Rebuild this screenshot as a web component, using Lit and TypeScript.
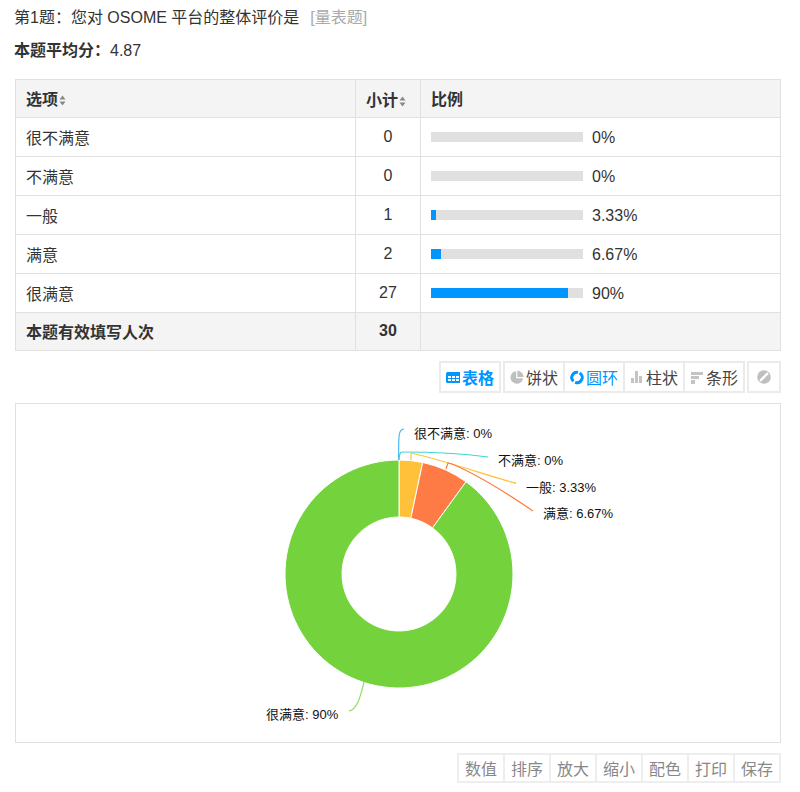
import { LitElement, html, css, svg } from "lit";
import { customElement } from "lit/decorators.js";

const rows = [
  ["很不满意", "0", 0, "0%"],
  ["不满意", "0", 0, "0%"],
  ["一般", "1", 3.33, "3.33%"],
  ["满意", "2", 6.67, "6.67%"],
  ["很满意", "27", 90, "90%"],
] as const;

const sortIcon = html`<svg class="sort" width="7" height="11" viewBox="0 0 7 11"><path d="M3.5 0.5 L6.5 4.5 H0.5Z M0.5 6.5 H6.5 L3.5 10.5Z" fill="#888"/></svg>`;

const views = [
  { label: "表格", on: true, bold: true, icon: svg`<rect x="0" y="2" width="15" height="11" rx="1.5" fill="#0095ff"/><g fill="#fff"><rect x="2" y="6" width="3" height="2"/><rect x="6" y="6" width="3" height="2"/><rect x="10" y="6" width="3" height="2"/><rect x="2" y="9" width="3" height="2"/><rect x="6" y="9" width="3" height="2"/><rect x="10" y="9" width="3" height="2"/></g>` },
  { label: "饼状", icon: svg`<path d="M6.2 1.2 A6.3 6.3 0 1 0 13 8.2 H6.2Z M7.4 0.8 V7 H13.6 A6.3 6.3 0 0 0 7.4 0.8Z" fill="#bfbfbf"/>` },
  { label: "圆环", on: true, icon: svg`<circle cx="7" cy="7.5" r="5.2" fill="none" stroke="#0095ff" stroke-width="3" pathLength="360" stroke-dasharray="170 25 145 20" transform="rotate(-60 7 7.5)"/>` },
  { label: "柱状", icon: svg`<g fill="#c4c4c4"><rect x="1" y="8" width="3" height="5"/><rect x="5" y="1" width="3" height="12"/><rect x="9" y="6" width="3" height="7"/></g>` },
  { label: "条形", icon: svg`<g fill="#c4c4c4"><rect x="1" y="2" width="12" height="3"/><rect x="1" y="6" width="8" height="3"/><rect x="1" y="10" width="4" height="4"/></g>` },
];

const CX = 383, CY = 170;
function polar(r: number, deg: number) {
  const a = (deg * Math.PI) / 180;
  return [CX + r * Math.sin(a), CY - r * Math.cos(a)];
}
function seg(a0: number, a1: number, fill: string) {
  const [x0, y0] = polar(114, a0), [x1, y1] = polar(114, a1), [x2, y2] = polar(57, a1), [x3, y3] = polar(57, a0);
  const lg = a1 - a0 > 180 ? 1 : 0;
  return svg`<path d="M${x0} ${y0} A114 114 0 ${lg} 1 ${x1} ${y1} L${x2} ${y2} A57 57 0 ${lg} 0 ${x3} ${y3}Z" fill="${fill}" stroke="#fff" stroke-width="1"/>`;
}

@customElement("app-root")
export class AppRoot extends LitElement {
  static styles = css`
    :host { display: block; width: 800px; height: 792px; overflow: hidden; background: #fff; color: #333;
      font-family: "Liberation Sans", "Noto Sans CJK SC", sans-serif; font-size: 16px; }
    .wrap { padding: 0 19px 0 15px; }
    .title { height: 34px; line-height: 36px; white-space: pre; margin-left: -1px; }
    .muted { color: #aaa; margin-left: 11px; }
    .avg { height: 45px; line-height: 34px; white-space: pre; }
    .avg b { font-weight: 700; margin-left: -1px; }
    table { width: 766px; border-collapse: separate; border-spacing: 0; table-layout: fixed; font-size: 16px;
      border-top: 1px solid #e0e0e0; border-left: 1px solid #e0e0e0; box-sizing: border-box; }
    td, th { border-right: 1px solid #e0e0e0; border-bottom: 1px solid #e0e0e0; height: 39px; padding: 0 10px; box-sizing: border-box; text-align: left; }
    th, .foot td { height: 38px; padding-bottom: 2px; background: #f4f4f4; font-weight: 700; }
    .c { text-align: center; padding: 0; }
    th.c { padding-right: 4px; }
    .sort { margin-left: 1px; vertical-align: -1px; }
    .ratio { display: flex; align-items: center; gap: 9px; }
    .pct { padding-top: 2px; }
    .track { width: 152px; height: 10px; background: #e0e0e0; flex: none; }
    .fill { height: 100%; background: #0095ff; }
    .bar { display: flex; justify-content: flex-end; gap: 2px; height: 32px; margin: 10px 0; }
    .group { display: flex; gap: 2px; padding: 2px; background: #ebebeb; }
    .btn { display: flex; align-items: center; justify-content: center; width: 58px; height: 28px; background: #fff; color: #444; gap: 2px; }
    .btn.on { color: #0095ff; }
    .btn.bold { font-weight: 700; }
    .btn.square { width: 30px; }
    .chart { display: block; width: 766px; height: 340px; box-sizing: border-box; border: 1px solid #e0e0e0; }
    .chart text { font-size: 13px; fill: #111; font-family: "Liberation Sans", "Noto Sans CJK SC", sans-serif; }
    .tools { display: flex; justify-content: flex-end; margin-top: 10px; }
    .tools .group { background: #eee; }
    .tools .btn { color: #888; width: 44px; height: 26px; }
  `;

  render() {
    return html`<div class="wrap">
      <div class="title">第1题：您对 OSOME 平台的整体评价是<span class="muted">[量表题]</span></div>
      <div class="avg"><b>本题平均分：</b>4.87</div>
      <table>
        <colgroup><col style="width:340px" /><col style="width:65px" /><col style="width:360px" /></colgroup>
        <thead><tr><th>选项${sortIcon}</th><th class="c">小计${sortIcon}</th><th>比例</th></tr></thead>
        <tbody>
          ${rows.map((r) => html`<tr>
            <td>${r[0]}</td><td class="c">${r[1]}</td>
            <td><div class="ratio"><div class="track"><div class="fill" style="width:${r[2]}%"></div></div><span class="pct">${r[3]}</span></div></td>
          </tr>`)}
          <tr class="foot"><td>本题有效填写人次</td><td class="c">30</td><td></td></tr>
        </tbody>
      </table>
      <div class="bar">
        <div class="group">${views.slice(0, 1).map((v) => this.view(v))}</div>
        <div class="group">${views.slice(1).map((v) => this.view(v))}</div>
        <div class="group"><div class="btn square"><svg width="14" height="14" viewBox="0 0 14 14"><circle cx="7" cy="7" r="6.8" fill="#bfbfbf"/><path d="M3 11 L11 3" stroke="#fff" stroke-width="2.4"/></svg></div></div>
      </div>
      <svg class="chart" viewBox="0 0 764 338">
        ${seg(0, 12, "#ffc13a")}${seg(12, 36, "#ff7b45")}${seg(36, 360, "#74d33c")}
        <g fill="none" stroke-width="1.2">
          <path d="M382.5 56 C383 41 382 32 384 28 C385 26 386 25 388 25" stroke="#4db8f5"/>
          <path d="M383 56 C383.5 50 384 48 386 48 C420 48 450 50 472 53" stroke="#3fd5d5"/>
          <path d="M395 56 V49 C430 57 470 71 499 79" stroke="#ffc13a"/>
          <circle cx="499" cy="79" r="1" fill="#ffc13a"/>
          <path d="M430 65 L432 59 L436 60 C465 72 495 92 517 107" stroke="#ff7b45"/>
          <path d="M348 278 C345 290 342 305 333 307" stroke="#8fdd68"/>
        </g>
        <text x="398" y="34">很不满意: 0%</text>
        <text x="482" y="61">不满意: 0%</text>
        <text x="510" y="88">一般: 3.33%</text>
        <text x="527" y="114">满意: 6.67%</text>
        <text x="250" y="315">很满意: 90%</text>
      </svg>
      <div class="tools"><div class="group">
        ${["数值", "排序", "放大", "缩小", "配色", "打印", "保存"].map((t) => html`<div class="btn">${t}</div>`)}
      </div></div>
    </div>`;
  }

  view(v: any) {
    return html`<div class="btn ${v.on ? "on" : ""} ${v.bold ? "bold" : ""}"><svg width="14" height="15" viewBox="0 0 14 15">${v.icon}</svg>${v.label}</div>`;
  }
}
